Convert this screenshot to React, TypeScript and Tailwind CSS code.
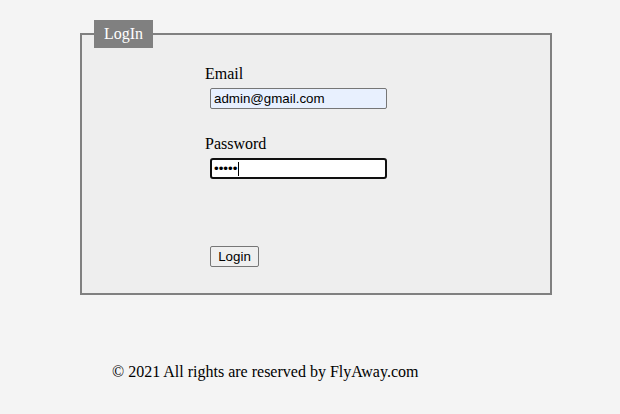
export default function App() {
  return (
    <div className="min-h-[414px] bg-[#f4f4f4] pt-5 font-['Liberation_Serif',serif] text-base text-black">
      <fieldset className="ml-20 w-[472px] border-2 border-[#808080] bg-[#eeeeee] pb-[26px]">
        <legend className="ml-3 bg-[#808080] px-[10px] py-[5px] leading-[18px] text-white">LogIn</legend>

        <div className="pl-[123px] pt-[17px]">
          <div className="leading-[18px]">Email</div>
          <input
            type="text"
            defaultValue="admin@gmail.com"
            className="mt-[5px] ml-[5px] block h-[21px] w-[177px] rounded-[2px] border border-[#767676] bg-[#e8f0fe] px-[3px] font-['Liberation_Sans',Arial,sans-serif] text-[13.33px] text-black outline-none"
          />

          <div className="mt-[26px] leading-[18px]">Password</div>
          <div className="relative mt-[5px] ml-[5px] w-[177px]">
            <input
              type="password"
              defaultValue="admin"
              className="block h-[21px] w-[177px] rounded-[3px] border-2 border-[#101010] bg-white px-[2px] font-['Liberation_Sans',Arial,sans-serif] text-[13.33px] text-black outline-none"
            />
            <span className="absolute left-[28px] top-[4px] h-[14px] w-px bg-black" />
          </div>

          <button className="mt-[67px] ml-[5px] block h-[21px] w-[49px] rounded-[2px] border border-[#767676] bg-[#efefef] font-['Liberation_Sans',Arial,sans-serif] text-[13.33px] text-black">
            Login
          </button>
        </div>
      </fieldset>

      <div className="mt-[68px] pl-[112px] leading-[18px]">© 2021 All rights are reserved by FlyAway.com</div>
    </div>
  );
}
